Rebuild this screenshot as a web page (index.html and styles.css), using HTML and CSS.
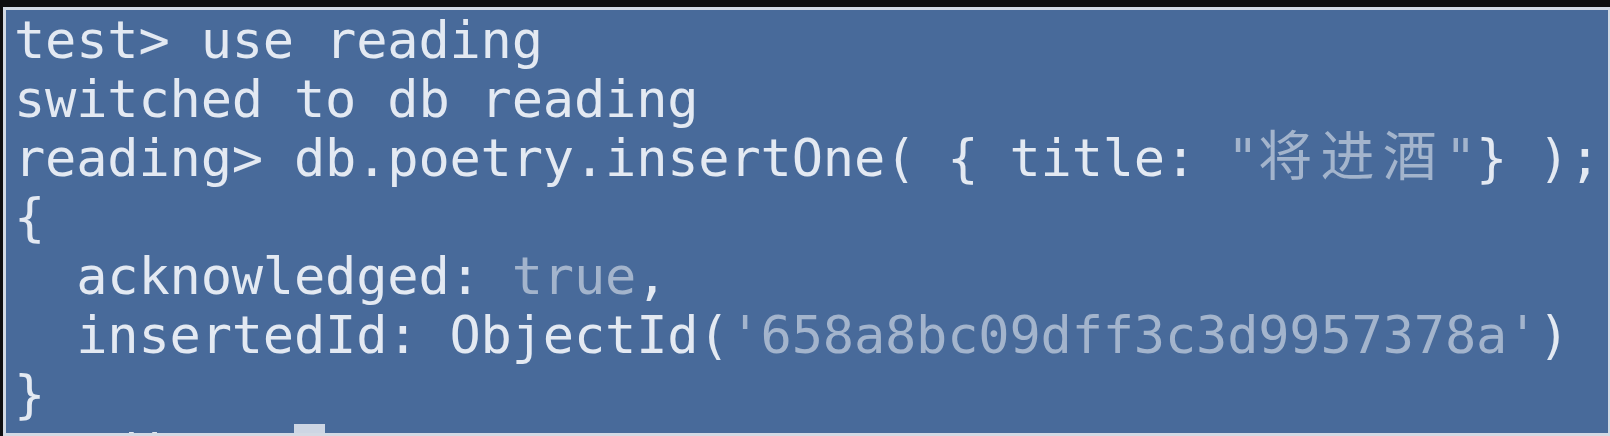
FILE: index.html
```html
<!DOCTYPE html>
<html lang="zh">
<head>
<meta charset="utf-8">
<title>mongosh</title>
<link rel="stylesheet" href="styles.css">
</head>
<body>
<div class="frame">
  <div class="term">
    <div class="line">test&gt; use reading</div>
    <div class="line">switched to db reading</div>
    <div class="line">reading&gt; db.poetry.insertOne( { title: <span class="dim">"<span class="cjk">将进酒</span>"</span>} );</div>
    <div class="line">{</div>
    <div class="line">  acknowledged: <span class="dim">true</span>,</div>
    <div class="line">  insertedId: ObjectId(<span class="dim">'658a8bc09dff3c3d9957378a'</span>)</div>
    <div class="line">}</div>
    <div class="line">reading&gt; <span class="cursor"></span></div>
  </div>
</div>
</body>
</html>
```
FILE: styles.css
```css
html, body {
  margin: 0;
  padding: 0;
}
body {
  background: #0f0f10;
  width: 1610px;
  height: 436px;
  overflow: hidden;
}
.frame {
  margin: 7px 0 0 3px;
  border-style: solid;
  border-color: #d3dae4;
  border-width: 3px 2px 3px 3px;
  background: #486a9a;
  height: 423px;
  overflow: hidden;
}
.term {
  padding: 1px 0 0 8px;
  font-family: "DejaVu Sans Mono", "Noto Sans CJK SC", monospace;
  font-size: 52px;
  letter-spacing: -0.2px;
  line-height: 59px;
  color: #e3e9f2;
}
.line {
  height: 59px;
  white-space: pre;
}
.dim {
  color: #a3b4cc;
}
.cjk {
  font-family: "Noto Sans CJK SC", sans-serif;
  font-size: 54px;
  letter-spacing: 8.2px;
  line-height: 0;
}
.cursor {
  display: inline-block;
  width: 31px;
  height: 59px;
  vertical-align: top;
  background: #cdd6e4;
}
```
